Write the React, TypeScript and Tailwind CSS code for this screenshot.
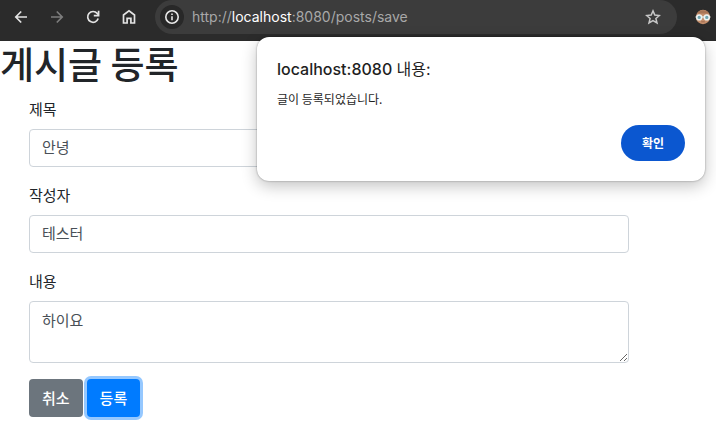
import React, { useState } from 'react';

const iconProps = {
  width: 16,
  height: 16,
  viewBox: '0 0 16 16',
  fill: 'none',
  stroke: 'currentColor',
  strokeWidth: 1.7,
  'aria-hidden': true,
};

function NavButton({ label, disabled, children }: { label: string; disabled?: boolean; children: React.ReactNode }) {
  return (
    <button
      type="button"
      aria-label={label}
      disabled={disabled}
      className="flex h-6 w-6 items-center justify-center rounded-full text-[#e3e3e3] disabled:text-[#7d7d7d]"
    >
      {children}
    </button>
  );
}

function BrowserBar() {
  return (
    <header className="flex h-[41px] items-start bg-[#2b2b2b] pr-[5px] pl-[9px]">
      <nav className="flex h-[34px] items-center gap-3">
        <NavButton label="뒤로">
          <svg {...iconProps}>
            <path d="M14 8H3M8.2 2.5L2.8 8l5.4 5.5" />
          </svg>
        </NavButton>
        <NavButton label="앞으로" disabled>
          <svg {...iconProps}>
            <path d="M2 8h11M7.8 2.5L13.2 8l-5.4 5.5" />
          </svg>
        </NavButton>
        <NavButton label="새로고침">
          <svg {...iconProps}>
            <path d="M13.2 9.6A5.4 5.4 0 1 1 12.2 4.4L13.4 5.8" />
            <path d="M13.6 1.8v4.8H8.8" />
          </svg>
        </NavButton>
        <NavButton label="홈">
          <svg {...iconProps}>
            <path d="M2.5 6L8 1.8 13.5 6v8H9.9V9.4H6.1V14H2.5z" />
          </svg>
        </NavButton>
      </nav>

      {/* Address bar */}
      <div className="ml-[14px] flex h-[34px] min-w-0 flex-1 items-center rounded-full bg-[#3c3c3c] pr-4 pl-[5px]">
        <button
          type="button"
          aria-label="사이트 정보"
          className="flex h-6 w-6 shrink-0 items-center justify-center rounded-full bg-[#282828] text-[#e8e8e8]"
        >
          <svg {...iconProps} strokeWidth={1.6}>
            <circle cx="8" cy="8" r="6.2" />
            <path d="M8 7.2v4" />
            <path d="M8 4.5v1.6" />
          </svg>
        </button>
        <p className="ml-2 flex-1 truncate font-['Inter',sans-serif] text-sm text-[#a8a8a8]">
          http://<span className="text-white">localhost</span>:8080/posts/save
        </p>
        <button type="button" aria-label="북마크" className="shrink-0 text-[#c7c7c7]">
          <svg {...iconProps} strokeWidth={1.5}>
            <path d="M8 1.9l1.8 4.2 4.6.4-3.5 3 1.1 4.5L8 11.6 4 14l1.1-4.5-3.5-3 4.6-.4z" />
          </svg>
        </button>
      </div>

      <button type="button" aria-label="프로필" className="ml-[18px] flex h-[34px] items-center">
        <svg width="16" height="16" viewBox="0 0 16 16" aria-hidden="true">
          <circle cx="8" cy="8" r="7.2" fill="#c48f6c" />
          <path d="M2.2 4.6C4 .2 12 .2 13.8 4.6z" fill="#a87556" />
          <path d="M.6 8h14.8" stroke="#dce6e6" strokeWidth="1.4" />
          <circle cx="4.2" cy="8.4" r="2.4" fill="#6fa3ae" stroke="#edf3f3" strokeWidth="1.5" />
          <circle cx="11.8" cy="8.4" r="2.4" fill="#6fa3ae" stroke="#edf3f3" strokeWidth="1.5" />
          <path d="M6.2 12.8h3.6" stroke="#a06a50" />
        </svg>
      </button>
    </header>
  );
}

function AlertDialog({ onClose }: { onClose: () => void }) {
  return (
    <div
      role="alertdialog"
      aria-labelledby="alert-title"
      aria-describedby="alert-message"
      className="absolute top-[37px] right-[11px] w-[448px] rounded-xl bg-white p-5 text-[#1f1f1f] shadow-[0_0_2px_rgba(0,0,0,0.4),0_5px_16px_rgba(0,0,0,0.24)]"
    >
      <h2 id="alert-title" className="font-['Inter','Noto_Sans_CJK_KR',sans-serif] text-base leading-6 font-medium">
        localhost:8080 <span className="font-normal">내용:</span>
      </h2>
      <p id="alert-message" className="mt-2 text-xs leading-5">
        글이 등록되었습니다.
      </p>
      <div className="mt-4 flex justify-end">
        <button
          type="button"
          onClick={onClose}
          className="h-9 w-16 rounded-full bg-[#0b57d0] text-xs font-bold text-white"
        >
          확인
        </button>
      </div>
    </div>
  );
}

const fieldClass = 'block w-full rounded border border-[#ced4da] bg-white px-3 text-[15px] leading-6 text-[#495057]';

export default function App() {
  const [alertOpen, setAlertOpen] = useState(true);

  return (
    <div className="relative min-h-screen bg-white font-['Noto_Sans_CJK_KR',sans-serif] text-[#212529]">
      <BrowserBar />

      <main>
        <h1 className="mb-3 text-[37px] leading-[44px] font-medium">게시글 등록</h1>

        <div className="px-[29px]">
          <form className="max-w-[600px] space-y-4 text-[15px] leading-6" onSubmit={(e) => e.preventDefault()}>
            <div>
              <label htmlFor="title" className="mb-2 block">제목</label>
              <input id="title" type="text" defaultValue="안녕" className={`${fieldClass} h-[38px] pb-1`} />
            </div>
            <div>
              <label htmlFor="author" className="mb-2 block">작성자</label>
              <input id="author" type="text" defaultValue="테스터" className={`${fieldClass} h-[38px] pb-1`} />
            </div>
            <div>
              <label htmlFor="content" className="mb-2 block">내용</label>
              <textarea id="content" defaultValue="하이요" className={`${fieldClass} h-[62px] resize py-1.5`} />
            </div>
            <div className="flex gap-1 font-medium text-white">
              <button type="button" className="h-[38px] rounded bg-[#6c757d] px-[13px]">
                취소
              </button>
              <button
                type="submit"
                onClick={() => setAlertOpen(true)}
                className="h-[38px] rounded bg-[#007bff] px-[13px] shadow-[0_0_0_3px_#95c8ff]"
              >
                등록
              </button>
            </div>
          </form>
        </div>
      </main>

      {alertOpen && <AlertDialog onClose={() => setAlertOpen(false)} />}
    </div>
  );
}
